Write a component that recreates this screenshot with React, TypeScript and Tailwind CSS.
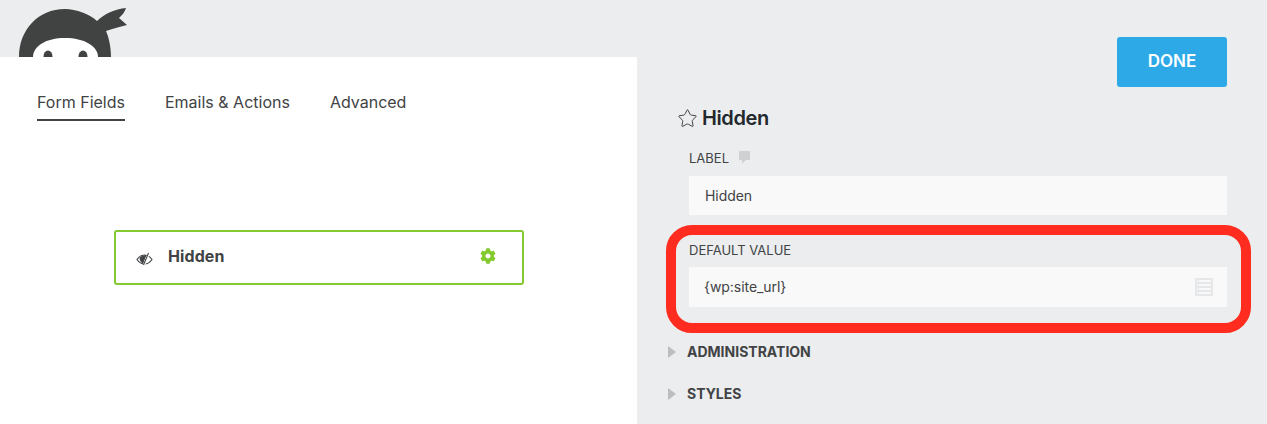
import { FaCog } from "react-icons/fa";
import { Star } from "lucide-react";

const NinjaLogo = () => (
  <svg width="130" height="57" viewBox="0 0 130 57" className="block">
    <path d="M19 57 C19 30 38 9 65 9 C76 9 90 14 97 21 C104 14 115 9 126 8 C125 12 122 15 119 18 L127 25 C119 27 112 29 106 31 C109 38 111 47 111 57 Z" fill="#414342" />
    <path d="M33 57 C33 46 46 38 65 38 C84 38 98 46 98 57 Z" fill="#ffffff" />
    <ellipse cx="48" cy="56.5" rx="4.5" ry="6" fill="#414342" />
    <ellipse cx="83" cy="56.5" rx="4.5" ry="6" fill="#414342" />
  </svg>
);

const EyeOff = () => (
  <svg width="17" height="14" viewBox="0 0 17 14" fill="none">
    <path d="M1 7.5 C3 4.5 5.5 3 8.5 3 C11.5 3 14 4.5 16 7.5 C14 10.5 11.5 12 8.5 12 C5.5 12 3 10.5 1 7.5 Z" stroke="#414344" strokeWidth="1.1" />
    <path d="M3.5 6 C5 4 7 3 10.5 3 L7 12 C5 10.5 3.5 8 3.5 6 Z" fill="#414344" />
    <path d="M13 1 L8 13" stroke="#ffffff" strokeWidth="2.2" />
    <path d="M12.5 1 L7.5 13" stroke="#414344" strokeWidth="1.1" />
  </svg>
);

const CommentIcon = () => (
  <svg width="11" height="13" viewBox="0 0 11 13">
    <path d="M1 0 H10 Q11 0 11 1 V8 Q11 9 10 9 H7 L3 12.5 V9 H1 Q0 9 0 8 V1 Q0 0 1 0 Z" fill="#cfd0d1" />
  </svg>
);

const ListIcon = () => (
  <svg width="18" height="18" viewBox="0 0 18 18">
    <path
      fillRule="evenodd"
      d="M0 0 H18 V18 H0 Z M2 2 V4 H3 V2 Z M4 2 V4 H16 V2 Z M2 6 V8 H3 V6 Z M4 6 V8 H16 V6 Z M2 10 V12 H3 V10 Z M4 10 V12 H16 V10 Z M2 14 V16 H3 V14 Z M4 14 V16 H16 V14 Z"
      fill="#e6e7e8"
    />
  </svg>
);

const Caret = () => (
  <span className="w-0 h-0 border-y-[6px] border-y-transparent border-l-[8px] border-l-[#bcbdbe]" />
);

export default function App() {
  return (
    <div className="relative flex w-[1267px] h-[424px] overflow-hidden bg-[#ebedef] text-[#414344] font-['Inter',sans-serif]">
      <div className="w-[637px] flex flex-col">
        <NinjaLogo />
        <div className="flex-1 bg-white">
          <div className="flex gap-10 pl-[37px] pt-[35px] text-base leading-5">
            <div className="h-[29px] border-b-2 border-[#414344]">Form Fields</div>
            <div>Emails &amp; Actions</div>
            <div>Advanced</div>
          </div>
          <div className="ml-[114px] mt-[109px] w-[410px] h-[55px] flex items-center border-2 border-[#84c92f] rounded-[3px] pl-[20px] pr-[26px] pb-[3px]">
            <span className="w-[32px] mt-[6px]">
              <EyeOff />
            </span>
            <span className="flex-1 text-base font-bold tracking-[0.1px]">Hidden</span>
            <FaCog className="text-[#84c92f] text-base" />
          </div>
        </div>
      </div>
      <div className="w-[630px] pl-[31px] pr-[40px] pt-[37px] flex flex-col">
        <div className="flex justify-end">
          <button className="w-[110px] h-[50px] rounded-[3px] bg-[#2ea9e8] text-white text-[17px] font-semibold">
            DONE
          </button>
        </div>
        <div className="mt-[18px] pl-[9px] flex items-center gap-[4px] h-[26px]">
          <Star size={21} strokeWidth={1} className="text-[#2b2d2f]" />
          <span className="text-xl font-semibold tracking-[-0.4px] text-[#23282d]">Hidden</span>
        </div>
        <div className="pl-[21px]">
          <div className="mt-[18px] h-[20px] flex items-center gap-[10px] text-[13px]">
            <span>LABEL</span>
            <span className="-mt-[4px]">
              <CommentIcon />
            </span>
          </div>
          <div className="mt-[7px] h-[39px] bg-[#f9f9f9] flex items-center px-4 text-sm tracking-[-0.05px]">Hidden</div>
          <div className="mt-[26px] h-[20px] flex items-center text-[13px]">DEFAULT VALUE</div>
          <div className="mt-[6px] h-[40px] bg-[#f9f9f9] flex items-center justify-between pl-[15px] pr-[14px] text-sm tracking-[-0.05px]">
            <span>{"{wp:site_url}"}</span>
            <ListIcon />
          </div>
        </div>
        <div className="mt-[35px] h-[20px] flex items-center gap-[11px] text-sm font-bold">
          <Caret />
          <span>ADMINISTRATION</span>
        </div>
        <div className="mt-[22px] h-[20px] flex items-center gap-[11px] text-sm font-bold">
          <Caret />
          <span>STYLES</span>
        </div>
      </div>
      <div className="absolute left-[666px] top-[225px] w-[585px] h-[108px] border-[10px] border-[#ff2c1f] rounded-[26px]" />
    </div>
  );
}
